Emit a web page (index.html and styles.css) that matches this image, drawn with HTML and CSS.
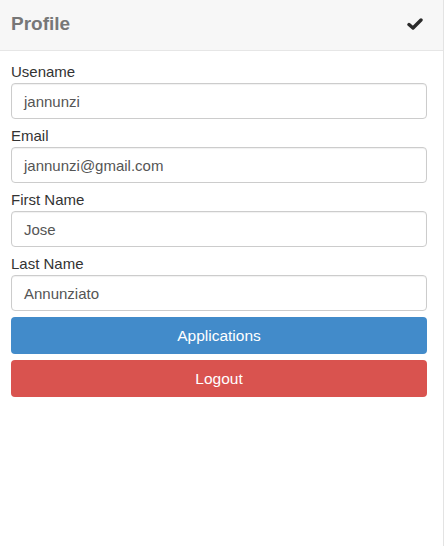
FILE: index.html
```html
<!DOCTYPE html>
<html>
<head>
<meta charset="utf-8">
<link rel="stylesheet" href="styles.css">
</head>
<body>
<div class="panel">
  <div class="header">
    <span class="title">Profile</span>
    <svg class="check" width="16" height="14" viewBox="0 0 16 14"><polyline points="2,7.5 6,11 14,3" fill="none" stroke="#2b2b2b" stroke-width="3.4" stroke-linecap="round" stroke-linejoin="round"/></svg>
  </div>
  <form class="body">
    <div class="group">
      <label class="label">Usename</label>
      <div class="input">jannunzi</div>
    </div>
    <div class="group">
      <label class="label">Email</label>
      <div class="input">jannunzi@gmail.com</div>
    </div>
    <div class="group">
      <label class="label">First Name</label>
      <div class="input">Jose</div>
    </div>
    <div class="group">
      <label class="label">Last Name</label>
      <div class="input">Annunziato</div>
    </div>
    <div class="btn btn-primary">Applications</div>
    <div class="btn btn-danger">Logout</div>
  </form>
</div>
</body>
</html>
```
FILE: styles.css
```css
html, body {
  margin: 0;
  padding: 0;
  background: #fff;
}
body {
  font-family: "Liberation Sans", Arial, sans-serif;
  width: 446px;
  height: 546px;
}
.panel {
  width: 443px;
  height: 546px;
  border-right: 1px solid #e3e3e3;
  box-sizing: content-box;
}
.header {
  height: 50px;
  background: #f7f7f7;
  border-bottom: 1px solid #e6e6e6;
  display: flex;
  align-items: center;
  justify-content: space-between;
  padding: 0 20px 0 11px;
}
.title {
  font-size: 19px;
  font-weight: bold;
  color: #777;
  margin-top: -2px;
}
.check {
  margin-top: -2px;
}
.body {
  margin: 0;
  padding: 10px 16px 0 11px;
}
.group {
  display: flex;
  flex-direction: column;
  margin-bottom: 6px;
}
.label {
  font-size: 15px;
  line-height: 20px;
  color: #333;
  padding-top: 1px;
  margin-bottom: 1px;
}
.input {
  height: 36px;
  box-sizing: border-box;
  border: 1px solid #ccc;
  border-radius: 4px;
  padding: 0 12px;
  display: flex;
  align-items: center;
  font-size: 15px;
  color: #555;
  box-shadow: inset 0 1px 1px rgba(0,0,0,0.06);
}
.btn {
  height: 37px;
  border-radius: 4px;
  display: flex;
  align-items: center;
  justify-content: center;
  color: #fff;
  font-size: 15.5px;
  margin-bottom: 6px;
}
.btn-primary {
  background: #428bca;
}
.btn-danger {
  background: #d9534f;
}
```
